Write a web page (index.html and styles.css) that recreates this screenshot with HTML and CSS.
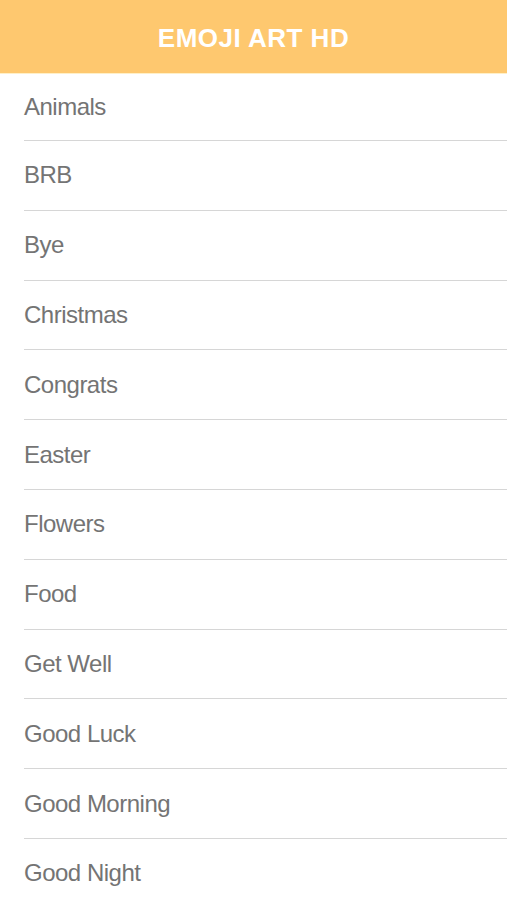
FILE: index.html
```html
<!DOCTYPE html>
<html>
<head>
<meta charset="utf-8">
<link rel="stylesheet" href="styles.css">
</head>
<body>
<header class="bar"><h1 class="title">EMOJI ART HD</h1></header>
<ul class="list">
<li class="row first">Animals</li>
<li class="row">BRB</li>
<li class="row">Bye</li>
<li class="row">Christmas</li>
<li class="row">Congrats</li>
<li class="row">Easter</li>
<li class="row">Flowers</li>
<li class="row">Food</li>
<li class="row">Get Well</li>
<li class="row">Good Luck</li>
<li class="row">Good Morning</li>
<li class="row">Good Night</li>
</ul>
</body>
</html>
```
FILE: styles.css
```css
html, body { margin: 0; padding: 0; background: #fff; }
body { font-family: "Liberation Sans", Arial, sans-serif; overflow: hidden; height: 900px; }
.bar {
  height: 74px;
  background: #fec86f;
  display: flex;
  align-items: center;
  justify-content: center;
  border-bottom: 1px solid #fff0c8;
  box-sizing: border-box;
}
.title {
  margin: 0;
  color: #fff;
  font-size: 26px;
  font-weight: bold;
  letter-spacing: 0.5px;
  padding-top: 4px;
}
.list { list-style: none; margin: 0; padding: 0 0 0 24px; }
.row {
  height: 68.8px;
  display: flex;
  align-items: center;
  border-bottom: 1px solid #d6d6d6;
  font-size: 24px;
  letter-spacing: -0.5px;
  color: #747474;
}
.row.first { height: 66px; }
```
